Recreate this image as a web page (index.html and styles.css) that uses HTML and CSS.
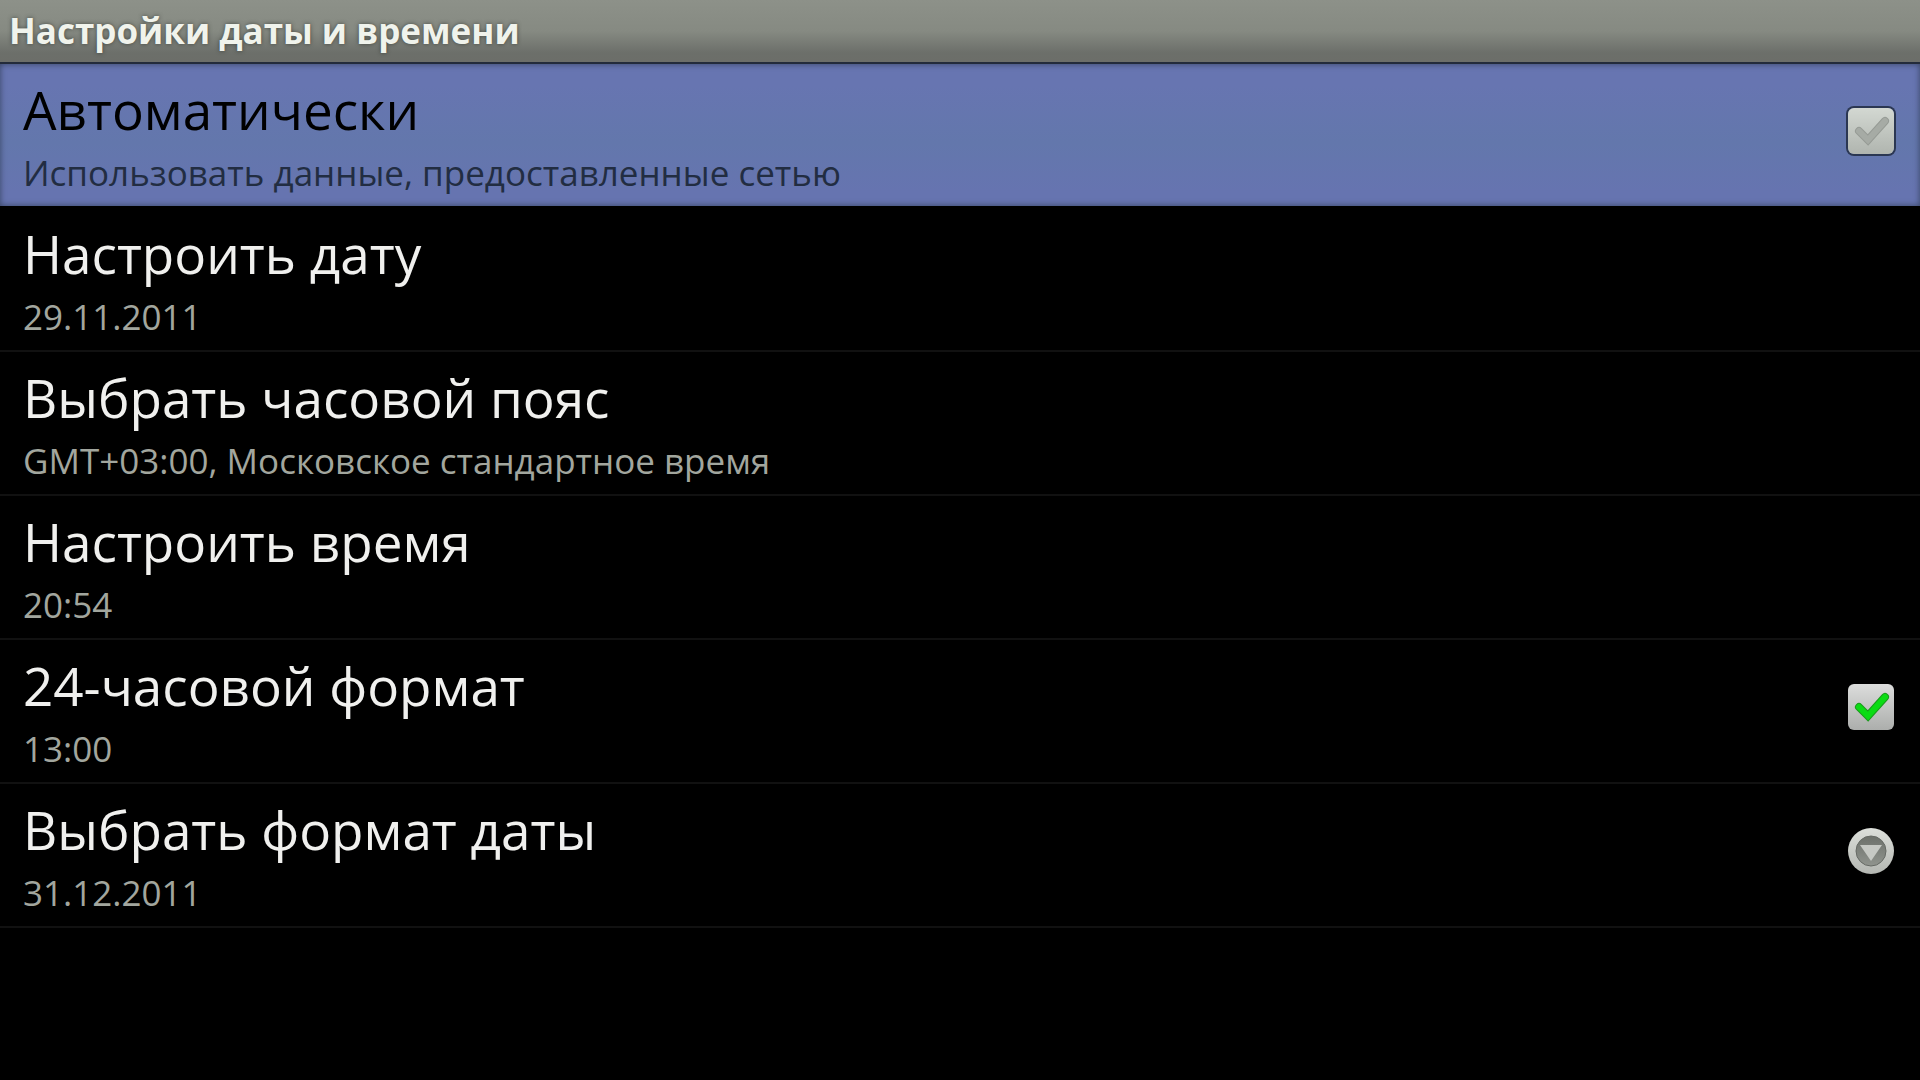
FILE: index.html
```
<!DOCTYPE html>
<html lang="ru">
<head>
  <meta charset="UTF-8">
  <meta name="viewport" content="width=device-width, initial-scale=1.0">
  <title>Настройки даты и времени</title>
  <link rel="stylesheet" href="styles.css">
</head>
<body>
  <header class="title-bar">
    <h1 class="title">Настройки даты и времени</h1>
  </header>
  <main class="settings">
    <label class="row row-selected">
      <span class="row-text">
        <span class="row-title">Автоматически</span>
        <span class="row-summary">Использовать данные, предоставленные сетью</span>
      </span>
      <span class="check">
        <input class="check-input" type="checkbox">
        <svg class="check-mark" viewBox="0 0 46 46">
          <path class="check-edge" d="M11 23l9 9 17-19"/>
          <path d="M11 23l9 9 17-19"/>
        </svg>
      </span>
    </label>
    <button class="row" type="button">
      <span class="row-text">
        <span class="row-title">Настроить дату</span>
        <span class="row-summary">29.11.2011</span>
      </span>
    </button>
    <button class="row" type="button">
      <span class="row-text">
        <span class="row-title">Выбрать часовой пояс</span>
        <span class="row-summary">GMT+03:00, Московское стандартное время</span>
      </span>
    </button>
    <button class="row" type="button">
      <span class="row-text">
        <span class="row-title">Настроить время</span>
        <span class="row-summary">20:54</span>
      </span>
    </button>
    <label class="row">
      <span class="row-text">
        <span class="row-title">24-часовой формат</span>
        <span class="row-summary">13:00</span>
      </span>
      <span class="check">
        <input class="check-input" type="checkbox" checked>
        <svg class="check-mark" viewBox="0 0 46 46">
          <path class="check-edge" d="M11 23l9 9 17-19"/>
          <path d="M11 23l9 9 17-19"/>
        </svg>
      </span>
    </label>
    <button class="row" type="button">
      <span class="row-text">
        <span class="row-title">Выбрать формат даты</span>
        <span class="row-summary">31.12.2011</span>
      </span>
      <svg class="more" viewBox="0 0 46 46">
        <defs>
          <linearGradient id="ring" x1="0" y1="0" x2="0" y2="1">
            <stop offset="0" stop-color="#dcdfda"/>
            <stop offset="1" stop-color="#b4b7b2"/>
          </linearGradient>
          <linearGradient id="disc" x1="0" y1="0" x2="0" y2="1">
            <stop offset="0" stop-color="#6c706a"/>
            <stop offset="1" stop-color="#90948e"/>
          </linearGradient>
        </defs>
        <circle cx="23" cy="23" r="23" fill="url(#ring)"/>
        <circle cx="23" cy="23" r="15" fill="url(#disc)" stroke="#666a65" stroke-width="1"/>
        <path d="M12 17h22L23 33z" fill="#c6c9c4"/>
      </svg>
    </button>
  </main>
</body>
</html>
```

FILE: styles.css
```
* {
  box-sizing: border-box;
}
body {
  margin: 0;
  min-height: 100vh;
  background: #000;
  color: #f0f0ee;
  font-family: 'Open Sans', 'Noto Sans', sans-serif;
}
.title-bar {
  padding: 7px 9px;
  border-bottom: 2px solid #232b3a;
  background: linear-gradient(#8d9189 0%, #868a82 50%, #6c6f6a 85%, #6c6e69 100%);
}
.title {
  margin: 0;
  font-size: 35px;
  line-height: 48px;
  color: #f0f3ec;
  text-shadow: 0 0 4px rgba(40,44,38,0.7);
}
.row {
  display: flex;
  align-items: flex-start;
  width: 100%;
  padding: 10px 26px 6px 23px;
  border: 0;
  border-bottom: 2px solid #111;
  background: none;
  color: inherit;
  font: inherit;
  text-align: left;
  cursor: pointer;
}
.row-selected {
  background: linear-gradient(#6775b1 15%, #6377ac 55%, #6674b0 90%);
  box-shadow: inset 0 0 6px #35425f;
  border-bottom-color: #000;
  color: #000;
}
.row-text {
  display: flex;
  flex-direction: column;
  flex: 1;
}
.row-title {
  font-size: 53px;
  line-height: 72px;
}
.row-summary {
  font-size: 35px;
  line-height: 54px;
  color: #a2a69e;
}
.row-selected .row-summary {
  color: #222d42;
}
.check {
  position: relative;
  width: 46px;
  height: 46px;
  margin-top: 34px;
}
.check-input {
  appearance: none;
  display: block;
  width: 46px;
  height: 46px;
  margin: 0;
  border-radius: 6px;
  background: linear-gradient(#dcdddc, #acaeac);
  cursor: pointer;
}
.row-selected .check-input {
  background: linear-gradient(#d3d8d2, #b0b5af);
  box-shadow: 0 0 0 2px #2b3752;
}
.check-mark {
  position: absolute;
  left: 0;
  top: 0;
  width: 46px;
  height: 46px;
  fill: none;
  stroke: #a6aba5;
  stroke-width: 6;
  stroke-linecap: round;
  pointer-events: none;
}
.check-edge {
  stroke: #969b95;
  stroke-width: 8;
}
.check-input:checked + .check-mark {
  stroke: #0bdc14;
}
.check-input:checked + .check-mark .check-edge {
  stroke: #1b9a1c;
}
.more {
  width: 46px;
  height: 46px;
  margin-top: 34px;
}
```
